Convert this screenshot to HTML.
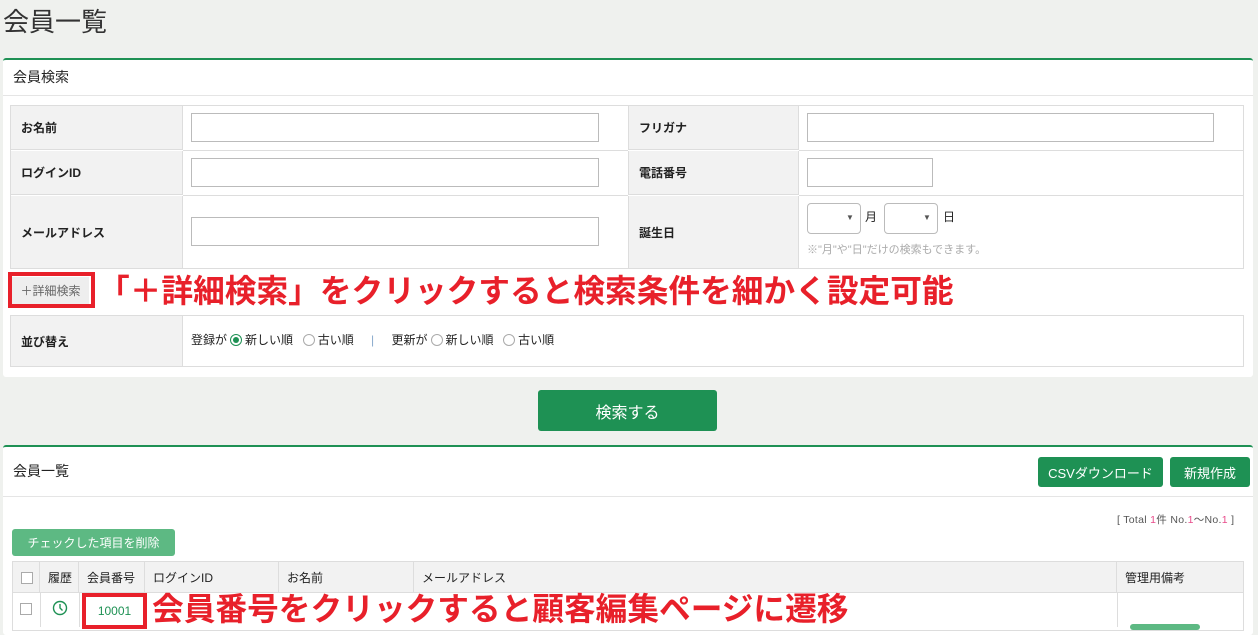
<!DOCTYPE html>
<html><head><meta charset="utf-8"><style>
*{box-sizing:border-box;margin:0;padding:0}
body{width:1258px;height:627px;overflow:hidden;background:#eff1ee;font-family:"Liberation Sans","Noto Sans CJK JP",sans-serif;color:#222;position:relative}
.a{position:absolute}
.panel{background:#fff;border-top:2px solid #1e9154;border-radius:3px}
.in{position:absolute;background:#fff;border:1px solid #bbb}
.lab{position:absolute;background:#f2f2f2;font-size:12px;font-weight:bold;padding-left:10px;display:flex;align-items:center;border-right:1px solid #ddd}
.btn{position:absolute;background:#1e9154;color:#fff;border-radius:3px;display:flex;align-items:center;justify-content:center}
.red{color:#e8202a;font-weight:bold;white-space:nowrap}
.rad{display:inline-block;width:12px;height:12px;border:1px solid #aaa;border-radius:50%;vertical-align:-2px;margin:0 3px 0 3px;position:relative}
.th{position:absolute;top:562px;height:31px;font-size:12px;display:flex;align-items:center;padding-left:8px;border-right:1px solid #ddd}
</style></head><body>
<div class="a" style="left:3px;top:2px;font-size:26px;color:#333">会員一覧</div>

<div class="a panel" style="left:3px;top:58px;width:1250px;height:319px"></div>
<div class="a" style="left:13px;top:67px;font-size:14px">会員検索</div>
<div class="a" style="left:3px;top:95px;width:1250px;border-top:1px solid #e5e5e5"></div>
<div class="a" style="left:10px;top:105px;width:1234px;height:164px;border:1px solid #ddd"></div>
<div class="lab" style="left:11px;top:106px;width:172px;height:44px;border-bottom:1px solid #ddd">お名前</div>
<div class="lab" style="left:11px;top:151px;width:172px;height:44px;border-bottom:1px solid #ddd">ログインID</div>
<div class="lab" style="left:11px;top:196px;width:172px;height:72px">メールアドレス</div>
<div class="lab" style="left:628px;top:106px;width:171px;height:44px;border-bottom:1px solid #ddd;border-left:1px solid #ddd">フリガナ</div>
<div class="lab" style="left:628px;top:151px;width:171px;height:44px;border-bottom:1px solid #ddd;border-left:1px solid #ddd">電話番号</div>
<div class="lab" style="left:628px;top:196px;width:171px;height:72px;border-left:1px solid #ddd">誕生日</div>
<div class="a" style="left:183px;top:150px;width:445px;border-top:1px solid #ddd"></div>
<div class="a" style="left:183px;top:195px;width:445px;border-top:1px solid #ddd"></div>
<div class="a" style="left:799px;top:150px;width:445px;border-top:1px solid #ddd"></div>
<div class="a" style="left:799px;top:195px;width:445px;border-top:1px solid #ddd"></div>
<div class="in" style="left:191px;top:113px;width:408px;height:29px"></div>
<div class="in" style="left:191px;top:158px;width:408px;height:29px"></div>
<div class="in" style="left:191px;top:217px;width:408px;height:29px"></div>
<div class="in" style="left:807px;top:113px;width:407px;height:29px"></div>
<div class="in" style="left:807px;top:158px;width:126px;height:29px"></div>
<div class="in" style="left:807px;top:203px;width:54px;height:31px;border-radius:4px"><span class="a" style="left:38px;top:9px;font-size:8px;color:#555">▼</span></div>
<div class="a" style="left:865px;top:208px;font-size:12px">月</div>
<div class="in" style="left:884px;top:203px;width:54px;height:31px;border-radius:4px"><span class="a" style="left:38px;top:9px;font-size:8px;color:#555">▼</span></div>
<div class="a" style="left:943px;top:208px;font-size:12px">日</div>
<div class="a" style="left:807px;top:241px;font-size:11px;color:#aaa">※"月"や"日"だけの検索もできます。</div>

<div class="a" style="left:8px;top:272px;width:87px;height:36px;border:4px solid #e8202a"></div>
<div class="a" style="left:12px;top:277px;width:77px;height:27px;background:#eee;font-size:12px;color:#666;display:flex;align-items:center;justify-content:center">＋詳細検索</div>
<div class="a red" style="left:98px;top:271px;font-size:31.7px;line-height:40px">「＋詳細検索」をクリックすると検索条件を細かく設定可能</div>

<div class="a" style="left:10px;top:315px;width:1234px;height:52px;border:1px solid #ddd"></div>
<div class="lab" style="left:11px;top:316px;width:172px;height:50px">並び替え</div>
<div class="a" style="left:191px;top:331px;font-size:12px;white-space:nowrap">登録が<span class="rad" style="border-color:#1e9154"><span class="a" style="left:2px;top:2px;width:6px;height:6px;border-radius:50%;background:#1e9154"></span></span>新しい順 &nbsp;<span class="rad"></span>古い順 <span style="color:#8ac;margin:0 14px">|</span> 更新が<span class="rad"></span>新しい順 &nbsp;<span class="rad"></span>古い順</div>

<div class="btn" style="left:538px;top:390px;width:179px;height:41px;font-size:16px">検索する</div>

<div class="a panel" style="left:3px;top:445px;width:1250px;height:190px"></div>
<div class="a" style="left:13px;top:461px;font-size:14px">会員一覧</div>
<div class="btn" style="left:1038px;top:457px;width:125px;height:30px;font-size:13px">CSVダウンロード</div>
<div class="btn" style="left:1170px;top:457px;width:80px;height:30px;font-size:13px">新規作成</div>
<div class="a" style="left:3px;top:496px;width:1250px;border-top:1px solid #e5e5e5"></div>
<div class="a" style="left:1117px;top:512px;font-size:10.5px;color:#555;white-space:nowrap;letter-spacing:0.3px">[ Total <span style="color:#e84a8a">1</span>件 No.<span style="color:#e84a8a">1</span>～No.<span style="color:#e84a8a">1</span> ]</div>
<div class="a" style="left:12px;top:529px;width:163px;height:27px;background:#5db983;border-radius:3px;color:#fff;font-size:12px;display:flex;align-items:center;justify-content:center">チェックした項目を削除</div>

<div class="a" style="left:12px;top:561px;width:1232px;height:70px;border:1px solid #ddd;background:#fff"></div>
<div class="a" style="left:13px;top:562px;width:1230px;height:31px;background:#f2f2f2;border-bottom:1px solid #ddd"></div>
<div class="th" style="left:13px;width:27px"><span style="display:inline-block;width:12px;height:12px;border:1px solid #aaa;background:#fff"></span></div>
<div class="th" style="left:40px;width:39px">履歴</div>
<div class="th" style="left:79px;width:66px">会員番号</div>
<div class="th" style="left:145px;width:134px">ログインID</div>
<div class="th" style="left:279px;width:135px">お名前</div>
<div class="th" style="left:414px;width:703px">メールアドレス</div>
<div class="th" style="left:1117px;width:127px;border-right:none">管理用備考</div>
<div class="a" style="left:40px;top:593px;height:34px;border-left:1px solid #ddd"></div>
<div class="a" style="left:79px;top:593px;height:34px;border-left:1px solid #ddd"></div>
<div class="a" style="left:1117px;top:593px;height:34px;border-left:1px solid #ddd"></div>
<div class="a" style="left:20px;top:603px;width:12px;height:12px;border:1px solid #aaa"></div>
<svg class="a" style="left:52px;top:600px" width="16" height="16" viewBox="0 0 16 16"><circle cx="8" cy="8" r="6.5" fill="none" stroke="#1e9154" stroke-width="1.4"/><path d="M8 4v4l2.5 2.5" fill="none" stroke="#1e9154" stroke-width="1.4"/></svg>
<div class="a" style="left:82px;top:593px;width:65px;height:36px;border:4px solid #e8202a;background:#fff;color:#1e9154;font-size:12px;display:flex;align-items:center;justify-content:center">10001</div>
<div class="a red" style="left:152px;top:589px;font-size:31.7px;line-height:40px">会員番号をクリックすると顧客編集ページに遷移</div>
<div class="a" style="left:1130px;top:624px;width:70px;height:6px;background:#5db983;border-radius:3px"></div>
</body></html>
